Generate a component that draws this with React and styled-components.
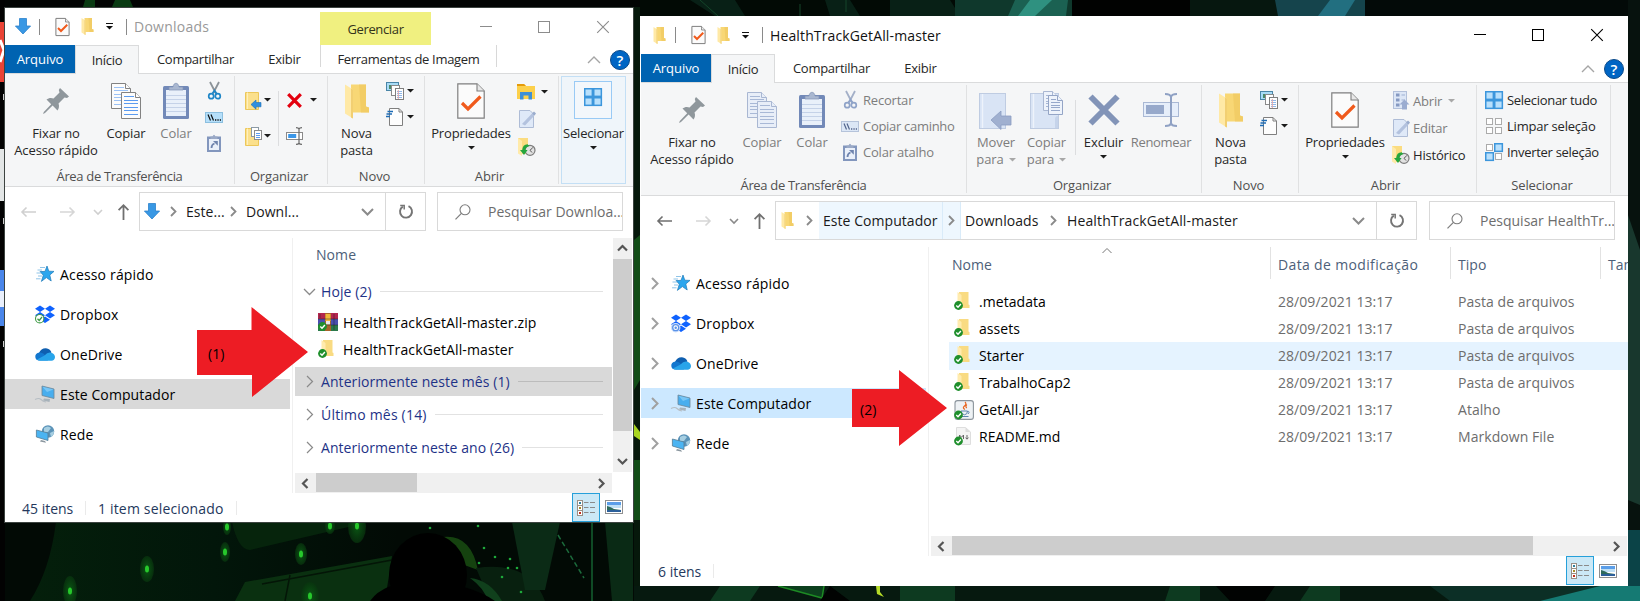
import React from "react";
import styled, { createGlobalStyle, css } from "styled-components";

const Global = createGlobalStyle`
  * { box-sizing: border-box; }
  html, body { margin: 0; padding: 0; background: #010502; overflow: hidden; }
  body { font-family: "Open Sans", "Noto Sans", sans-serif; font-size: 14px; color: #000; letter-spacing: 0.08px; }
  svg { display: block; flex: none; overflow: visible; }
`;

/* ---------- desktop and windows ---------- */
const Desktop = styled.div`
  position: relative;
  width: 1640px;
  height: 601px;
  overflow: hidden;
`;
const Wallpaper = styled.svg`
  position: absolute;
  inset: 0;
`;
const Window = styled.section`
  position: absolute;
  left: ${(p) => p.$x}px;
  top: ${(p) => p.$y}px;
  width: ${(p) => p.$w}px;
  height: ${(p) => p.$h}px;
  padding-left: ${(p) => p.$pad || 0}px;
  display: flex;
  flex-direction: column;
  background: #fff;
  overflow: hidden;
`;
const Frame = styled.div`
  position: absolute;
  left: 4px;
  top: 7px;
  width: 630px;
  height: 516px;
  background: #3c4340;
`;
const Pointer = styled.div`
  position: absolute;
  left: ${(p) => p.$x}px;
  top: ${(p) => p.$y}px;
  width: ${(p) => p.$w}px;
  height: ${(p) => p.$h}px;
  display: flex;
  align-items: center;
  padding-left: ${(p) => p.$pad}px;
  padding-top: 2px;
  font-size: 14px;
  background: #ed1c24;
  clip-path: polygon(${(p) => p.$shape});
`;

/* ---------- title bar ---------- */
const TitleBar = styled.header`
  display: flex;
  align-items: center;
  height: ${(p) => p.$h}px;
  flex: none;
`;
const TitleLeft = styled.div`
  display: flex;
  align-items: center;
  width: 315px;
  padding-left: 10px;
`;
const IconCell = styled.span`
  display: flex;
  align-items: center;
  justify-content: ${(p) => p.$justify || "center"};
  width: ${(p) => p.$w}px;
  flex: none;
`;
const Bar = styled.i`
  width: 1px;
  height: 16px;
  background: #8a8a8a;
`;
const Title = styled.span`
  padding-left: 7px;
  font-size: 14px;
  white-space: nowrap;
  color: ${(p) => (p.$dim ? "#999" : "#111")};
  letter-spacing: ${(p) => p.$ls || 0}px;
`;
const ContextLabel = styled.div`
  align-self: flex-end;
  width: 111px;
  height: 33px;
  display: flex;
  align-items: center;
  justify-content: center;
  font-size: 13px;
  letter-spacing: -0.35px;
  padding-top: 1px;
  color: #33331a;
  background: #f0f080;
`;
const Captions = styled.div`
  margin-left: auto;
  display: flex;
  padding-right: ${(p) => p.$pr}px;
`;

/* ---------- tabs ---------- */
const TabBar = styled.nav`
  display: flex;
  align-items: stretch;
  height: 29px;
  flex: none;
  font-size: 13px;
  color: #262626;
  box-shadow: inset 0 -1px #dadbdc;
`;
const Tab = styled.div`
  display: flex;
  align-items: center;
  justify-content: center;
  width: ${(p) => p.$w}px;
  height: 28px;
  white-space: nowrap;
  letter-spacing: ${(p) => p.$ls ?? -0.25}px;
  ${(p) => p.$file && css`background: #0063b1; color: #fff;`}
  ${(p) => p.$active && css`
    height: 29px;
    background: #f5f6f7;
    border: 1px solid #dadbdc;
    border-bottom: 0;
  `}
  ${(p) => p.$context && css`
    height: 22px;
    padding-top: 6px;
    margin-left: 3px;
    border-left: 1px solid #d8d8d8;
    border-right: 1px solid #d8d8d8;
  `}
`;
const TabTools = styled.div`
  margin-left: auto;
  display: flex;
  align-items: center;
  gap: 10px;
  padding-right: ${(p) => p.$pr}px;
`;
const Help = styled.span`
  width: 20px;
  height: 20px;
  border-radius: 50%;
  background: #0065c4;
  border: 1px solid #0b4a8a;
  color: #fff;
  font: 600 15px/18px "Open Sans", sans-serif;
  text-align: center;
`;

/* ---------- ribbon ---------- */
const Ribbon = styled.div`
  display: flex;
  height: 113px;
  flex: none;
  padding: 2px 0 2px;
  background: #f5f6f7;
  border-bottom: 1px solid #dadbdc;
  font-size: 13px;
  color: #262626;
`;
const Group = styled.div`
  display: flex;
  flex-direction: column;
  justify-content: space-between;
  width: ${(p) => p.$w}px;
  height: 108px;
  flex: none;
  border-right: 1px solid #e0e1e2;
`;
const GroupBody = styled.div`
  display: flex;
  height: 88px;
  padding-left: ${(p) => p.$pl || 0}px;
`;
const GroupLabel = styled.div`
  height: 16px;
  line-height: 16px;
  text-align: center;
  padding-right: ${(p) => p.$pr || 0}px;
  color: #505050;
  letter-spacing: ${(p) => p.$ls ?? -0.15}px;
`;
const BigButton = styled.div`
  display: flex;
  flex-direction: column;
  align-items: center;
  width: ${(p) => p.$w}px;
  padding-top: 7px;
  flex: none;
  color: ${(p) => (p.$off ? "#7d7d7d" : "#262626")};
`;
const BigIcon = styled.div`
  height: 36px;
  margin-bottom: 6px;
  display: flex;
  align-items: center;
`;
const Line = styled.div`
  height: 17px;
  line-height: 17px;
  white-space: nowrap;
  display: flex;
  align-items: center;
  gap: 5px;
  letter-spacing: ${(p) => p.$ls ?? -0.1}px;
`;
const CaretBelow = styled.div`
  margin-top: 4px;
`;
const Stack = styled.div`
  display: flex;
  flex-direction: column;
  padding-top: ${(p) => p.$pt}px;
  margin-left: ${(p) => p.$ml || 0}px;
`;
const SmallButton = styled.div`
  display: flex;
  align-items: center;
  height: ${(p) => p.$h}px;
  gap: ${(p) => p.$gap || 0}px;
  white-space: nowrap;
  letter-spacing: ${(p) => p.$ls ?? -0.2}px;
  color: ${(p) => (p.$off ? "#7d7d7d" : "#262626")};
`;
const Divider = styled.i`
  width: 1px;
  height: ${(p) => p.$h}px;
  margin: ${(p) => p.$m};
  background: #dcdddf;
`;
const SelectGroup = styled.div`
  width: 65px;
  height: 108px;
  margin-left: 2px;
  border: 1px solid #c3dff5;
  background: #eff5fa;
  display: flex;
  flex-direction: column;
  align-items: center;
  padding-top: 4px;
`;
const SelectFrame = styled.div`
  width: 38px;
  height: 38px;
  margin-bottom: 6px;
  margin-right: 2px;
  border: 1px solid #99caf5;
  background: #f3f7fb;
  display: flex;
  justify-content: center;
  padding-top: 6px;
`;

/* ---------- address row ---------- */
const AddressRow = styled.div`
  display: flex;
  height: 51px;
  flex: none;
  padding: 5px 0 6px;
`;
const History = styled.div`
  display: flex;
  align-items: center;
  width: 134px;
  padding-left: 16px;
`;
const Box = styled.div`
  display: flex;
  align-items: stretch;
  height: 39px;
  border: 1px solid #d9d9d9;
  width: ${(p) => p.$w}px;
  margin-right: ${(p) => p.$mr || 0}px;
  overflow: hidden;
`;
const Crumb = styled.span`
  display: flex;
  align-items: center;
  width: ${(p) => p.$w}px;
  flex: none;
  padding-left: ${(p) => p.$pl || 0}px;
  white-space: nowrap;
  letter-spacing: ${(p) => p.$ls || 0.05}px;
  color: #1a1a1a;
  ${(p) => p.$hot && css`background: #eef7fe; border-right: 1px solid #d9ebf9;`}
`;
const Grow = styled.span`
  flex: 1;
`;
const Refresh = styled.span`
  width: 40px;
  display: flex;
  align-items: center;
  justify-content: center;
  border-left: 1px solid #d9d9d9;
`;
const SearchText = styled.span`
  align-self: center;
  padding-left: 17px;
  white-space: nowrap;
  color: #6d6d6d;
  letter-spacing: ${(p) => p.$ls || 0}px;
`;

/* ---------- body ---------- */
const Body = styled.div`
  display: flex;
  flex: 1;
  min-height: 0;
`;
const Side = styled.aside`
  width: 288px;
  padding-top: 16px;
  border-right: 1px solid #f0f0f0;
  flex: none;
`;
const SideItem = styled.div`
  display: flex;
  align-items: center;
  width: 285px;
  height: 30px;
  margin: 5px 0 10px;
  background: ${(p) => p.$bg || "transparent"};
  & + & { margin-top: 10px; }
`;
const SideArrow = styled.span`
  width: 29px;
  padding-left: 11px;
`;
const SideIcon = styled.span`
  width: 22px;
  margin-right: 4px;
  display: flex;
  justify-content: center;
`;
const Label = styled.span`
  white-space: nowrap;
  letter-spacing: ${(p) => p.$ls ?? 0.08}px;
`;
const Main = styled.main`
  flex: 1;
  min-width: 0;
  display: flex;
  flex-direction: column;
  padding-left: 2px;
`;
const Split = styled.div`
  display: flex;
  flex: 1;
  min-height: 0;
`;
const List = styled.div`
  width: 317px;
  display: flex;
  flex-direction: column;
`;
const FileList = styled.div`
  flex: 1;
  padding-left: 18px;
`;
const ListHead = styled.div`
  height: 33px;
  line-height: 33px;
  padding-left: 21px;
  margin-bottom: 6px;
  color: #4d6079;
`;
const GroupHead = styled.div`
  display: flex;
  align-items: center;
  height: 29px;
  margin-top: ${(p) => p.$mt || 0}px;
  margin-bottom: ${(p) => p.$mb || 0}px;
  padding: 0 9px 0 9px;
  color: #1e3287;
  background: ${(p) => (p.$sel ? "#d9d9d9" : "transparent")};
`;
const Rule = styled.i`
  flex: 1;
  height: 1px;
  margin-left: 8px;
  background: ${(p) => (p.$dark ? "#bcbcbc" : "#e2e2e2")};
`;
const ChevronCell = styled.span`
  width: 17px;
  display: flex;
  padding-left: ${(p) => p.$pl || 0}px;
`;
const FileRow = styled.div`
  display: flex;
  align-items: center;
  height: 27px;
  padding-left: ${(p) => p.$pl}px;
  ${(p) => p.$hot && css`background: #e5f3ff; height: 28px; margin-bottom: -1px; padding-bottom: 1px;`}
`;
const FileIcon = styled.span`
  width: 25px;
  flex: none;
`;
const Cell = styled.span`
  width: ${(p) => p.$w}px;
  flex: none;
  white-space: nowrap;
  letter-spacing: ${(p) => p.$ls ?? 0.05}px;
  color: ${(p) => (p.$dim ? "#6d6d6d" : "#000")};
`;
const Columns = styled.div`
  display: flex;
  height: 32px;
  margin-bottom: 9px;
  overflow: hidden;
`;
const Column = styled.div`
  position: relative;
  width: ${(p) => p.$w}px;
  flex: none;
  padding: 2px 0 0 ${(p) => p.$pl}px;
  line-height: 31px;
  color: #4d6079;
  white-space: nowrap;
  letter-spacing: ${(p) => p.$ls || 0.05}px;
  border-right: 1px solid #e2e2e2;
`;
const SortMark = styled.span`
  position: absolute;
  left: 171px;
  top: 0;
`;
const VScroll = styled.div`
  width: 19px;
  height: 234px;
  margin-left: auto;
  margin-right: 1px;
  display: flex;
  flex-direction: column;
  align-items: center;
  background: #f0f0f0;
`;
const HScroll = styled.div`
  height: 20px;
  width: ${(p) => p.$w}px;
  flex: none;
  display: flex;
  align-items: center;
  background: #f0f0f0;
`;
const Arrow = styled.span`
  width: ${(p) => p.$w || 19}px;
  height: ${(p) => p.$h || 20}px;
  flex: none;
  display: flex;
  align-items: center;
  justify-content: center;
`;
const VThumb = styled.div`
  width: 100%;
  height: 172px;
  background: #cdcdcd;
`;
const HThumb = styled.div`
  height: 19px;
  align-self: flex-start;
  width: ${(p) => p.$w}px;
  background: #cdcdcd;
`;

/* ---------- status bar ---------- */
const Status = styled.footer`
  display: flex;
  align-items: center;
  height: ${(p) => p.$h}px;
  flex: none;
  color: #24385c;
  padding-left: 17px;
`;
const StatusCell = styled.span`
  width: ${(p) => p.$w}px;
  height: 14px;
  line-height: 15px;
  margin-right: 12px;
  border-right: 1px solid #eaeaea;
  white-space: nowrap;
  letter-spacing: ${(p) => p.$ls || 0}px;
`;
const ViewButton = styled.span`
  width: 28px;
  height: 29px;
  margin-left: auto;
  margin-right: 5px;
  align-self: flex-start;
  border: 1px solid #26a0da;
  background: #cbe8f6;
  display: flex;
  align-items: center;
  justify-content: center;
`;
const ThumbView = styled.span`
  margin-right: ${(p) => p.$mr}px;
  padding-bottom: 1px;
`;

/* ---------- icons ---------- */
const Svg = ({ w, h, children, ...r }) => (
  <svg width={w} height={h} viewBox={`0 0 ${w} ${h}`} fill="none" {...r}>{children}</svg>
);
const Caret = ({ c = "#1b1b1b" }) => (
  <Svg w={7} h={4}><path d="M0 0H7L3.5 3.6Z" fill={c} /></Svg>
);
const Chevron = ({ dir = "right", c = "#8a8a8a", size = 5, sw = 1.6 }) => {
  const s = size;
  const d = {
    right: [s, 2 * s, `M0 0L${s} ${s}L0 ${2 * s}`],
    left: [s, 2 * s, `M${s} 0L0 ${s}L${s} ${2 * s}`],
    down: [2 * s, s, `M0 0L${s} ${s}L${2 * s} 0`],
    up: [2 * s, s, `M0 ${s}L${s} 0L${2 * s} ${s}`],
  }[dir];
  return <Svg w={d[0]} h={d[1]}><path d={d[2]} stroke={c} strokeWidth={sw} /></Svg>;
};
const DownArrow = () => (
  <Svg w={16} h={17}><path d="M4.5 .5H11.5V8H15.6L8 16L.4 8H4.5Z" fill="#3998e4" stroke="#2b82cd" strokeWidth=".8" /></Svg>
);
const Folder = ({ w = 13, h = 17 }) => (
  <svg width={w} height={h} viewBox="0 0 24 34">
    <path d="M6 0H21V22L24 23V28H6Z" fill="#f8d775" />
    <path d="M14 0H21V22L24 23V28H16Z" fill="#efc75c" opacity=".6" />
    <path d="M0 0L8 5V34L0 29Z" fill="#ffe9a6" />
    <path d="M6 4L8 5V34L6 33Z" fill="#f2cf72" />
  </svg>
);
const CheckDoc = ({ w = 14, h = 18 }) => (
  <svg width={w} height={h} viewBox="0 0 28 36">
    <path d="M.8 .8H20L27.2 8V35.2H.8Z" fill="#fbfbfb" stroke="#7f7f7f" strokeWidth={w < 20 ? 2 : 1.2} />
    <path d="M20 .8V8H27.2" fill="#e8e8e8" stroke="#7f7f7f" strokeWidth={w < 20 ? 1.6 : 1.1} />
    <path d="M5 20L11 26L23.5 13.5" fill="none" stroke="#f05a1c" strokeWidth={w < 20 ? 4 : 3.2} />
  </svg>
);
const QuickCaret = () => (
  <Svg w={7} h={7}><path d="M0 .5H7" stroke="#111" /><path d="M0 3H7L3.5 6.6Z" fill="#111" /></Svg>
);
const Pin = () => (
  <Svg w={26} h={26}>
    <path d="M17 0L26 8.5L24 10L21.5 9.5L15.5 15.5C16.5 18 16 20.5 14.5 22.5L9.6 17.6L2 25L0 26L.8 24L8.2 16.2L3.5 11.5C5.5 10 8 9.5 10.5 10.5L16.5 4.5L15.8 2Z" fill="#8f979c" />
  </Svg>
);
const Page = ({ x, y, w = 20, h = 26, fill, edge, line, n = 6 }) => (
  <g transform={`translate(${x} ${y})`}>
    <path d={`M.5 .5H${w - 5.5}L${w - 0.5} 5.5V${h - 0.5}H.5Z`} fill={fill} stroke={edge} />
    <path d={`M${w - 5.5} .5V5.5H${w - 0.5}`} stroke={edge} fill={fill} />
    {Array.from({ length: n }, (_, i) => {
      const yy = Math.round(4 + i * ((h - 6) / n)) + 0.5;
      return <path key={i} d={`M3 ${yy}H${yy < 7 ? w - 7 : w - 3}`} stroke={line} />;
    })}
  </g>
);
const CopyIcon = ({ off }) => {
  const c = off ? { fill: "#e8eef8", edge: "#a9b7d2", line: "#a8b8d6" } : { fill: "#fcfcfc", edge: "#828282", line: "#5b9bf0" };
  return (
    <Svg w={30} h={36}>
      <Page x={0} y={0} {...c} line={off ? c.line : "#9cc2f5"} />
      <Page x={10} y={9} w={20} h={27} {...c} />
    </Svg>
  );
};
const Clipboard = () => (
  <Svg w={26} h={36}>
    <rect y="3" width="26" height="33" rx="1.5" fill="#7289b8" />
    <rect x="3" y="7" width="20" height="26" fill="#e9f0fa" />
    <path d="M3 12.5H23M3 16.5H23M3 20.5H23M3 24.5H23M3 28.5H23" stroke="#c5d2e8" />
    <path d="M6 7V4H10C10.5 -1 15.5 -1 16 4H20V7Z" fill="#a9b7d0" stroke="#8293b5" strokeWidth=".7" />
  </Svg>
);
const Scissors = ({ off }) => {
  const b = off ? "#8fa3c8" : "#1f86c7";
  return (
    <Svg w={13} h={18}>
      <path d="M2 0L8 11.5M11 0L5 11.5" stroke={off ? "#a4b0c8" : "#8b9298"} strokeWidth="1.8" />
      <circle cx="3.2" cy="14.2" r="2.5" stroke={b} strokeWidth="1.7" />
      <circle cx="9.8" cy="14.2" r="2.5" stroke={b} strokeWidth="1.7" />
      <path d="M4.5 11.5L6.5 8.5L8.5 11.5" stroke={b} strokeWidth="1.8" />
    </Svg>
  );
};
const PathIcon = ({ off }) => (
  <Svg w={18} h={11}>
    <rect x=".5" y=".5" width="17" height="10" fill={off ? "#dce7f6" : "#b5dffa"} stroke={off ? "#b5c3da" : "#8cbfdf"} />
    <path d="M3 2.5L5.5 8.5M6 2.5L8.5 8.5" stroke={off ? "#53658c" : "#111"} strokeWidth="1.2" />
    <path d="M10 8H11.3M12.4 8H13.7M14.8 8H16" stroke={off ? "#53658c" : "#111"} strokeWidth="1.3" />
  </Svg>
);
const PasteLink = () => (
  <Svg w={14} h={18}>
    <rect y="2.5" width="14" height="15.5" fill="#8296bd" />
    <rect x="2" y="5" width="10" height="11" fill="#eaf0fa" />
    <path d="M3.5 5V2.5H5.5Q7 -1 8.5 2.5H10.5V5Z" fill="#9aa9c6" />
    <path d="M4.5 14Q4.5 10.5 7.5 9.5" stroke="#6f84ae" strokeWidth="1.8" />
    <path d="M6 7H10.8V11.8Z" fill="#6f84ae" />
  </Svg>
);
const BookSmall = ({ copy }) => (
  <Svg w={18} h={19}>
    <path d="M.5 1.5H13.5V18.5H.5Z" fill="#fbe08c" stroke="#ecc75a" />
    <path d="M2.5 1.5V18" stroke="#fff0bd" />
    {copy ? (
      <>
        <rect x="6.5" y=".5" width="7" height="9" fill="#fff" stroke="#8c9aa5" />
        <rect x="9.5" y="3.5" width="7" height="9" fill="#fff" stroke="#8c8c8c" />
        <path d="M11 6.5H15M11 8.5H15M11 10.5H15" stroke="#5b9bf0" />
      </>
    ) : (
      <path d="M6 13.5L11 9V11.5H16V15.8H11V18.2Z" fill="#2e8fdf" stroke="#1f6fb5" strokeWidth=".6" />
    )}
  </Svg>
);
const RedX = () => (
  <Svg w={15} h={15}><path d="M1.2 1.2L13.8 13.8M13.8 1.2L1.2 13.8" stroke="#e3000f" strokeWidth="3.2" /></Svg>
);
const RenameSmall = () => (
  <Svg w={17} h={18}>
    <rect x=".5" y="5.5" width="16" height="7" fill="#fff" stroke="#8a8a8a" />
    <rect x="2.2" y="7" width="8" height="4" fill="#3a96e8" />
    <path d="M13 1V17M10 .6Q12.6 .6 13 2Q13.4 .6 16 .6M10 17.4Q12.6 17.4 13 16Q13.4 17.4 16 17.4" stroke="#6a6a6a" strokeWidth="1.2" />
  </Svg>
);
const NewItem = () => (
  <Svg w={18} h={18}>
    <rect x=".5" y=".5" width="12" height="8" fill="#a9dcf7" stroke="#4a86a8" />
    <rect x="3" y="3" width="3" height="4" fill="#4a8a6a" />
    <rect x="5.5" y="3.5" width="8" height="10" fill="#fff" stroke="#8a8a8a" />
    <rect x="9.5" y="6.5" width="8" height="11" fill="#fff" stroke="#7f7f7f" />
    <path d="M11 9.5H16M11 11.5H16M11 13.5H16M11 15.5H16" stroke="#8fb8ea" />
    <path d="M12.3 8V17" stroke="#e7a7a7" />
  </Svg>
);
const EasyAccess = () => (
  <Svg w={18} h={18}>
    <path d="M3.5 .5H13L16.5 4V17.5H3.5Z" fill="#fdfdfd" stroke="#7f7f7f" />
    <path d="M13 .5V4H16.5" stroke="#7f7f7f" />
    <path d="M1.5 3.5H7M.5 6H6M0 8.5H4" stroke="#1f6cb5" strokeWidth="1.3" />
  </Svg>
);
const OpenFolder = () => (
  <Svg w={18} h={17}>
    <path d="M0 1H7L9 3H18V16H0Z" fill="#fcd04b" />
    <path d="M0 1H7L9 3H0Z" fill="#e59b0a" />
    <path d="M3 16.5V9H15V16.5H11.5V12.5H6.5V16.5Z" fill="#3d8fd8" />
  </Svg>
);
const EditDoc = () => (
  <Svg w={17} h={18}>
    <path d="M.5 .5H11L14.5 4V17.5H.5Z" fill="#dfe9f8" stroke="#aebcd6" />
    <path d="M3 14L13 3.5L15.5 5.5L6 15.5Z" fill="#b3c2de" />
    <path d="M13 3.5L15 1.5L17 3.5L15.5 5.5Z" fill="#9aaccd" />
  </Svg>
);
const OpenListOff = () => (
  <Svg w={17} h={19}>
    <rect x=".5" y=".5" width="13" height="17" fill="#dce6f6" stroke="#b2c0da" />
    <path d="M3 2.5H6.5V5.5H3ZM3 7.5H6.5V10.5H3ZM3 12.5H6.5V15.5H3Z" fill="#8599c2" />
    <path d="M8.5 4H12M8.5 9H12" stroke="#9db0d2" />
    <path d="M11.5 8.5L16.5 13.5H14V18.5H9V13.5H6.5Z" fill="#9aacd0" />
  </Svg>
);
const HistoryIcon = () => (
  <Svg w={18} h={18}>
    <path d="M0 0H10V16H4L0 15Z" fill="#fbdc80" />
    <path d="M0 0L4 3V18L0 15.5Z" fill="#ffeaa9" />
    <circle cx="12" cy="12.3" r="5" fill="#e2e2e2" stroke="#7c7c7c" strokeWidth="1.2" />
    <path d="M12 12.3L14.8 9.6M12 12.3L14 14.5" stroke="#555" />
    <path d="M9.6 6.2Q4.5 6.5 4.2 12H2L6 17L9.6 12H7.4Q7.5 9 11.5 8Z" fill="#25a63d" />
  </Svg>
);
const Grid4 = ({ fills = [1, 1, 1, 1] }) => (
  <Svg w={18} h={18}>
    {fills.map((f, i) => {
      const x = (i % 2) * 9, y = i > 1 ? 9 : 0;
      return f
        ? <rect key={i} x={x + 0.75} y={y + 0.75} width="7.6" height="7.6" fill="#b9e0fc" stroke="#3c96dc" strokeWidth="1.5" />
        : <rect key={i} x={x + 1.5} y={y + 1.5} width="6" height="6" fill="#fff" stroke="#ababab" />;
    })}
  </Svg>
);
const BigBook = ({ copy }) => (
  <Svg w={34} h={38}>
    <rect x=".5" y="2.5" width={copy ? 28 : 26} height="35" fill="#d9e4f5" stroke="#bfcce2" />
    <path d="M3.5 3V37" stroke="#eef3fb" strokeWidth="1.4" />
    {copy ? (
      <>
        <Page x={13} y={0} w={15} h={20} fill="#eef3fb" edge="#a9b7d2" line="#a8b8d6" n={5} />
        <Page x={18} y={4} w={15} h={20} fill="#eef3fb" edge="#94a5c6" line="#97a9cb" n={5} />
        <path d="M25 37V28Q25 25 28 25V37Z" fill="#c5d3ea" />
      </>
    ) : (
      <path d="M12 29L22 20V25H32V34H22V38.5Z" fill="#a0b0d0" stroke="#8c9dc2" strokeWidth=".8" />
    )}
  </Svg>
);
const BigX = () => (
  <Svg w={32} h={32}><path d="M2.5 2.5L29.5 29.5M29.5 2.5L2.5 29.5" stroke="#8294b8" strokeWidth="6" /></Svg>
);
const BigRename = () => (
  <Svg w={36} h={34}>
    <rect x=".5" y="9.5" width="35" height="14" fill="#e6eefa" stroke="#a9b8d4" />
    <rect x="3" y="12" width="18" height="9" fill="#97a9cb" />
    <path d="M28 2V32M22 1Q27.5 1 28 4Q28.5 1 34 1M22 33Q27.5 33 28 30Q28.5 33 34 33" stroke="#8fa1c4" strokeWidth="2" />
  </Svg>
);
const NavArrow = ({ dir, c }) => (
  <Svg w={15} h={10}>
    {dir === "left"
      ? <path d="M15 5H1.2M5.5 .5L1 5L5.5 9.5" stroke={c} strokeWidth="1.6" />
      : <path d="M0 5H13.8M9.5 .5L14 5L9.5 9.5" stroke={c} strokeWidth="1.6" />}
  </Svg>
);
const UpArrow = () => (
  <Svg w={11} h={16}><path d="M5.5 16V1.2M.6 6.2L5.5 1.2L10.4 6.2" stroke="#707070" strokeWidth="1.8" /></Svg>
);
const RefreshIcon = () => (
  <Svg w={14} h={15}>
    <path d="M9.5 2.2A6 6 0 1 1 3.8 2.6" stroke="#757575" strokeWidth="1.9" />
    <path d="M1.2 1.5H5.2V5.6" stroke="#757575" strokeWidth="1.5" />
  </Svg>
);
const Magnifier = () => (
  <Svg w={16} h={16}>
    <circle cx="10" cy="5.8" r="5" stroke="#7c7c7c" strokeWidth="1.1" />
    <path d="M6.4 9.4L.5 15.3" stroke="#7c7c7c" strokeWidth="1.2" />
  </Svg>
);
const Star = () => (
  <Svg w={18} h={16}>
    <path d="M11 0L12.8 5.2L18 5.4L13.8 9L15.2 15L10.4 11.6L5.4 15.4L7.3 9.2L4 5.6L9 5.4Z" fill="#2ba6ee" stroke="#1b79b8" strokeWidth=".7" />
    <path d="M4 1.5H9M1.5 4H6M.5 7H5M2 10H6M0 12.8H4.5" stroke="#8fc4e8" />
  </Svg>
);
const Dropbox = ({ sync }) => (
  <Svg w={20} h={19}>
    <path d="M5 .5L10 3.7L5 7L0 3.7ZM15 .5L20 3.7L15 7L10 3.7ZM5 7L10 10.3L5 13.5L0 10.3ZM15 7L20 10.3L15 13.5L10 10.3ZM10 11.6L15 14.8L10 18L5 14.8Z" fill="#0f62fe" />
    <circle cx="4.7" cy="13.7" r="4.2" fill={sync ? "#5a93e8" : "#fff"} stroke={sync ? "#cfe0fb" : "#3e9a45"} strokeWidth="1.1" />
    {sync
      ? <circle cx="4.7" cy="13.7" r="1.8" stroke="#fff" strokeWidth="1.1" />
      : <path d="M2.5 13.8L4.2 15.5L7 12" stroke="#3e9a45" strokeWidth="1.3" />}
  </Svg>
);
const OneDrive = () => (
  <Svg w={20} h={13}>
    <path d="M4 5Q6 0 11 .2Q15 .5 16.5 4.5L9 8Z" fill="#0f5fb0" />
    <path d="M.3 9Q0 5 4.5 4.5Q7 4.2 9 6L13 12.5H3.5Q.6 12 .3 9Z" fill="#1277cf" />
    <path d="M9.5 7.5Q13 3.4 17 5Q20 6.3 20 9.3Q19.6 12.6 16.5 12.8H5Q3 12.5 2 11.5Z" fill="#28a4ea" />
  </Svg>
);
const Computer = () => (
  <Svg w={20} h={17}>
    <path d="M7 0L19 3V12.5L7 9.5Z" fill="#49aeee" stroke="#6d8698" strokeWidth=".8" />
    <path d="M7.5 .8L18.5 3.6L12 6Z" fill="#8fd0f8" opacity=".7" />
    <path d="M9 12.5L15 13L14.5 16L8 14.5Z" fill="#a7b2ba" />
    <path d="M0 13.5Q4 11.5 6 13.5T11 16" stroke="#b7bec4" strokeWidth="1.1" />
  </Svg>
);
const Network = () => (
  <Svg w={19} h={18}>
    <circle cx="12" cy="6.5" r="6.2" fill="#5b93b8" />
    <path d="M8 3Q12 0 15 3L12 7L8 8ZM14 8L18 6Q18 10 15 12Z" fill="#a7cfe2" />
    <path d="M.4 5L12 8V15.5L.4 12Z" fill="#4bb4f2" stroke="#557c94" strokeWidth=".8" />
    <path d="M5 15L9 16L10 17.8L4 16.6Z" fill="#8b979f" />
  </Svg>
);
const Badge = ({ y = 9 }) => (
  <g transform={`translate(0 ${y})`}>
    <circle cx="4.5" cy="4.5" r="4.4" fill="#1f8f2c" />
    <path d="M2.3 4.6L4 6.3L6.9 3" stroke="#fff" strokeWidth="1.4" />
  </g>
);
const FolderFile = () => (
  <Svg w={20} h={19}>
    <path d="M5 0H14.5V12.5L15.5 13V16H5Z" fill="#f9db82" />
    <path d="M3.5 0L7.5 3V17L3.5 15Z" fill="#ffebae" />
    <Badge />
  </Svg>
);
const ZipFile = () => (
  <Svg w={20} h={19}>
    <rect width="20" height="6" fill="#b3264e" />
    <rect y="6" width="20" height="6" fill="#4a4fae" />
    <rect y="12" width="20" height="6" fill="#2c7a4b" />
    <rect x="7" width="6" height="18" fill="#a8642a" />
    <path d="M7.5 1H12.5V8H7.5Z" fill="#f0b83c" />
    <rect x="8" y="8" width="4" height="3.5" fill="#e9e9e9" />
    <path d="M2 1V5M16 1V17M0 6H20M0 12H20" stroke="#222" opacity=".45" />
    <Badge />
  </Svg>
);
const JarFile = () => (
  <Svg w={20} h={20}>
    <rect x="1" y=".6" width="18.4" height="18.8" rx="2.5" fill="#eef2f5" stroke="#8b949c" strokeWidth="1.1" />
    <path d="M11 2Q13 4 10.5 6T11 9.5M12.8 4.5Q11 6.5 12.8 8" stroke="#e8641e" strokeWidth="1.2" />
    <path d="M7 11H13.5Q13.5 14.5 10.5 14.8Q7.6 14.5 7 11ZM13.5 11.5Q16.5 11 14 14M6.5 16.5H14.5" stroke="#5c84ad" strokeWidth="1" />
    <Badge y={10.5} />
  </Svg>
);
const MdFile = () => (
  <Svg w={20} h={19}>
    <path d="M2.5 .5H11.5L16.5 5V17.5H2.5Z" fill="#f4f4f4" stroke="#dedede" />
    <path d="M11.5 .5V5H16.5Z" fill="#dcdcdc" />
    <path d="M5.5 12V8L7.5 10.3L9.5 8V12M13 8V12M11.5 10.6L13 12.2L14.5 10.6" stroke="#666" />
    <Badge y={9.5} />
  </Svg>
);
const DetailsIcon = () => (
  <Svg w={18} h={16}>
    {[0, 5, 10].map((y, i) => (
      <g key={y}>
        <rect x=".5" y={y + 0.5} width="5" height="5" fill="#fff" stroke="#9a8f86" />
        <rect x="2" y={y + 2} width="2" height="2" fill={["#2f7f9c", "#a58b2a", "#c2301c"][i]} />
        <path d={`M7 ${y + 2.5}H11.5M13 ${y + 2.5}H18`} stroke="#8a8a8a" />
      </g>
    ))}
  </Svg>
);
const PictureIcon = () => (
  <Svg w={18} h={14}>
    <rect x=".5" y=".5" width="17" height="13" fill="#fff" stroke="#8f8f8f" />
    <rect x="2" y="2" width="14" height="5" fill="#5b9ee8" />
    <rect x="2" y="5" width="14" height="3" fill="#bfe0f5" />
    <path d="M2 6Q6 7 9 9L16 10V12H2Z" fill="#2f6b5c" />
    <path d="M2 10H16V12H2Z" fill="#2c5f9a" />
  </Svg>
);
const Minimize = ({ c }) => <Svg w={12} h={12}><path d="M0 5.5H12" stroke={c} /></Svg>;
const Maximize = ({ c }) => <Svg w={12} h={12}><rect x=".5" y=".5" width="11" height="11" stroke={c} /></Svg>;
const Close = ({ c }) => <Svg w={12} h={12}><path d="M.2 .2L11.8 11.8M11.8 .2L.2 11.8" stroke={c} strokeWidth="1.1" /></Svg>;

/* ---------- shared pieces ---------- */
const QuickAccess = ({ icon, title, dim, ls }) => (
  <TitleLeft>
    <IconCell $w={16}>{icon}</IconCell>
    <IconCell $w={16}><Bar /></IconCell>
    <IconCell $w={30}><CheckDoc w={15} h={18} /></IconCell>
    <IconCell $w={20}><Folder /></IconCell>
    <IconCell $w={16} $justify="flex-end"><QuickCaret /></IconCell>
    <IconCell $w={14} $justify="flex-end"><Bar /></IconCell>
    <Title $dim={dim} $ls={ls}>{title}</Title>
  </TitleLeft>
);
const CaptionButtons = ({ c, pr }) => (
  <Captions $pr={pr}>
    <IconCell $w={58}><Minimize c={c} /></IconCell>
    <IconCell $w={58}><Maximize c={c} /></IconCell>
    <IconCell $w={60}><Close c={c} /></IconCell>
  </Captions>
);
const BaseTabs = () => (
  <>
    <Tab $file $w={70} $ls={-0.05}>Arquivo</Tab>
    <Tab $active $w={64}>Início</Tab>
    <Tab $w={113}>Compartilhar</Tab>
    <Tab $w={65}>Exibir</Tab>
  </>
);
const ClipboardButtons = ({ off }) => (
  <>
    <BigButton $w={90}>
      <BigIcon><Pin /></BigIcon>
      <Line>Fixar no</Line>
      <Line>Acesso rápido</Line>
    </BigButton>
    <BigButton $w={50} $off={off}><BigIcon><CopyIcon off={off} /></BigIcon><Line>Copiar</Line></BigButton>
    <BigButton $w={50} $off><BigIcon><Clipboard /></BigIcon><Line>Colar</Line></BigButton>
  </>
);
const NewGroup = () => (
  <Group $w={97}>
    <GroupBody>
      <BigButton $w={57}>
        <BigIcon><Folder w={24} h={35} /></BigIcon>
        <Line>Nova</Line>
        <Line>pasta</Line>
      </BigButton>
      <Stack $pt={2} $ml={1}>
        <SmallButton $h={26} $gap={3}><NewItem /><Caret /></SmallButton>
        <SmallButton $h={26} $gap={3}><EasyAccess /><Caret /></SmallButton>
      </Stack>
    </GroupBody>
    <GroupLabel $pr={3}>Novo</GroupLabel>
  </Group>
);
const PropertiesButton = () => (
  <BigButton $w={92}>
    <BigIcon><CheckDoc w={28} h={36} /></BigIcon>
    <Line $ls={-0.15}>Propriedades</Line>
    <CaretBelow><Caret /></CaretBelow>
  </BigButton>
);
const HistoryNav = ({ back }) => (
  <History>
    <IconCell $w={15}><NavArrow dir="left" c={back ? "#6f6f6f" : "#d0d0d0"} /></IconCell>
    <IconCell $w={39} $justify="flex-end"><NavArrow dir="right" c="#d6d6d6" /></IconCell>
    <IconCell $w={27} $justify="flex-end"><Chevron dir="down" size={4} c={back ? "#8a8a8a" : "#cfcfcf"} /></IconCell>
    <IconCell $w={27} $justify="flex-end"><UpArrow /></IconCell>
  </History>
);
const places = [
  ["Acesso rápido", () => <Star />, 0.17],
  ["Dropbox", (s) => <Dropbox sync={s} />, 0.2],
  ["OneDrive", () => <OneDrive />, 0.1],
  ["Este Computador", () => <Computer />, 0.1],
  ["Rede", () => <Network />, 0.15],
];
const Places = ({ arrows, selected }) => (
  <Side>
    {places.map(([name, icon, ls]) => (
      <SideItem key={name} $bg={name === "Este Computador" ? selected : undefined}>
        <SideArrow>{arrows && <Chevron size={5.5} c="#a0a0a0" sw={2} />}</SideArrow>
        <SideIcon>{icon(arrows)}</SideIcon>
        <Label $ls={ls}>{name}</Label>
      </SideItem>
    ))}
  </Side>
);

/* ---------- left window ---------- */
const DownloadsWindow = () => (
  <Window $x={5} $y={8} $w={628} $h={514}>
    <TitleBar $h={37}>
      <QuickAccess icon={<DownArrow />} title="Downloads" dim ls={0.25} />
      <ContextLabel>Gerenciar</ContextLabel>
      <CaptionButtons c="#8c8c8c" pr={0} />
    </TitleBar>
    <TabBar>
      <BaseTabs />
      <Tab $context $w={177} $ls={-0.3}>Ferramentas de Imagem</Tab>
      <TabTools $pr={3}><Chevron dir="up" size={6} c="#a5a5a5" sw={1.4} /><Help>?</Help></TabTools>
    </TabBar>
    <Ribbon>
      <Group $w={230}>
        <GroupBody $pl={6}>
          <ClipboardButtons />
          <Stack $pt={2} $ml={3}>
            <SmallButton $h={26}><IconCell $w={20}><Scissors /></IconCell></SmallButton>
            <SmallButton $h={26}><IconCell $w={20}><PathIcon /></IconCell></SmallButton>
            <SmallButton $h={26}><IconCell $w={20}><PasteLink /></IconCell></SmallButton>
          </Stack>
        </GroupBody>
        <GroupLabel $ls={-0.33}>Área de Transferência</GroupLabel>
      </Group>
      <Group $w={93}>
        <GroupBody $pl={10}>
          <Stack $pt={6}>
            <SmallButton $h={36} $gap={1}><BookSmall /><Caret /></SmallButton>
            <SmallButton $h={36} $gap={1}><BookSmall copy /><Caret /></SmallButton>
          </Stack>
          <Divider $h={55} $m="15px 6px 0 7px" />
          <Stack $pt={6}>
            <SmallButton $h={36} $gap={7}><IconCell $w={18}><RedX /></IconCell><Caret /></SmallButton>
            <SmallButton $h={36}><IconCell $w={18}><RenameSmall /></IconCell></SmallButton>
          </Stack>
        </GroupBody>
        <GroupLabel $pr={4}>Organizar</GroupLabel>
      </Group>
      <NewGroup />
      <Group $w={134}>
        <GroupBody>
          <PropertiesButton />
          <Stack $pt={2}>
            <SmallButton $h={27} $gap={6}><OpenFolder /><Caret /></SmallButton>
            <SmallButton $h={28}><IconCell $w={20}><EditDoc /></IconCell></SmallButton>
            <SmallButton $h={28}><IconCell $w={20}><HistoryIcon /></IconCell></SmallButton>
          </Stack>
        </GroupBody>
        <GroupLabel $pr={4}>Abrir</GroupLabel>
      </Group>
      <SelectGroup>
        <SelectFrame><Grid4 /></SelectFrame>
        <Line $ls={-0.2}>Selecionar</Line>
        <CaretBelow><Caret /></CaretBelow>
      </SelectGroup>
    </Ribbon>
    <AddressRow>
      <HistoryNav />
      <Box $w={287} $mr={11}>
        <Crumb $pl={4} $w={46}><DownArrow /><Crumb $pl={11} $w={20}><Chevron size={4.5} sw={1.8} /></Crumb></Crumb>
        <Crumb $w={45}>Este...</Crumb>
        <Crumb $w={15}><Chevron size={4.5} sw={1.8} /></Crumb>
        <Crumb $w={60}>Downl...</Crumb>
        <Grow />
        <IconCell $w={23} $justify="flex-start"><Chevron dir="down" size={5.5} sw={2} /></IconCell>
        <Refresh><RefreshIcon /></Refresh>
      </Box>
      <Box $w={186}>
        <IconCell $w={33} $justify="flex-end"><Magnifier /></IconCell>
        <SearchText>Pesquisar Downloa...</SearchText>
      </Box>
    </AddressRow>
    <Body>
      <Places selected="#d9d9d9" />
      <Main>
        <Split>
          <List>
            <ListHead>Nome</ListHead>
            <GroupHead $mb={3}><ChevronCell><Chevron dir="down" size={5.5} sw={1.3} /></ChevronCell><Label>Hoje (2)</Label><Rule /></GroupHead>
            <FileRow $pl={23}><FileIcon><ZipFile /></FileIcon><Label $ls={0.12}>HealthTrackGetAll-master.zip</Label></FileRow>
            <FileRow $pl={23}><FileIcon><FolderFile /></FileIcon><Label $ls={0.12}>HealthTrackGetAll-master</Label></FileRow>
            <GroupHead $sel $mt={4}><ChevronCell $pl={3}><Chevron size={5.5} sw={1.2} /></ChevronCell><Label>Anteriormente neste mês (1)</Label><Rule $dark /></GroupHead>
            <GroupHead $mt={4}><ChevronCell $pl={3}><Chevron size={5.5} sw={1.2} /></ChevronCell><Label $ls={0.2}>Último mês (14)</Label><Rule /></GroupHead>
            <GroupHead $mt={4}><ChevronCell $pl={3}><Chevron size={5.5} sw={1.2} /></ChevronCell><Label $ls={0.05}>Anteriormente neste ano (26)</Label><Rule /></GroupHead>
          </List>
          <VScroll>
            <Arrow $h={21}><Chevron dir="up" size={4.5} c="#555" sw={2.2} /></Arrow>
            <VThumb />
            <Grow />
            <Arrow $h={21}><Chevron dir="down" size={4.5} c="#555" sw={2.2} /></Arrow>
          </VScroll>
        </Split>
        <HScroll $w={317}>
          <Arrow $w={21}><Chevron dir="left" size={4.5} c="#555" sw={2.2} /></Arrow>
          <HThumb $w={101} />
          <Grow />
          <Arrow $w={21}><Chevron size={4.5} c="#555" sw={2.2} /></Arrow>
        </HScroll>
      </Main>
    </Body>
    <Status $h={29}>
      <StatusCell $w={64}>45 itens</StatusCell>
      <StatusCell $w={139} $ls={0.17}>1 item selecionado</StatusCell>
      <ViewButton><DetailsIcon /></ViewButton>
      <ThumbView $mr={10}><PictureIcon /></ThumbView>
    </Status>
  </Window>
);

/* ---------- right window ---------- */
const files = [
  [".metadata", "Pasta de arquivos", <FolderFile />],
  ["assets", "Pasta de arquivos", <FolderFile />],
  ["Starter", "Pasta de arquivos", <FolderFile />],
  ["TrabalhoCap2", "Pasta de arquivos", <FolderFile />],
  ["GetAll.jar", "Atalho", <JarFile />],
  ["README.md", "Markdown File", <MdFile />],
];
const ProjectWindow = () => (
  <Window $x={640} $y={16} $w={988} $h={570} $pad={1}>
    <TitleBar $h={38}>
      <QuickAccess icon={<Folder />} title="HealthTrackGetAll-master" ls={0.13} />
      <CaptionButtons c="#000" pr={1} />
    </TitleBar>
    <TabBar>
      <BaseTabs />
      <TabTools $pr={4}><Chevron dir="up" size={6} c="#a5a5a5" sw={1.4} /><Help>?</Help></TabTools>
    </TabBar>
    <Ribbon>
      <Group $w={326}>
        <GroupBody $pl={6}>
          <ClipboardButtons off />
          <Stack $pt={2} $ml={3}>
            <SmallButton $off $h={26} $gap={3}><IconCell $w={20}><Scissors off /></IconCell>Recortar</SmallButton>
            <SmallButton $off $h={26} $gap={3} $ls={-0.3}><IconCell $w={20}><PathIcon off /></IconCell>Copiar caminho</SmallButton>
            <SmallButton $off $h={26} $gap={3} $ls={-0.2}><IconCell $w={20}><PasteLink /></IconCell>Colar atalho</SmallButton>
          </Stack>
        </GroupBody>
        <GroupLabel $ls={-0.33}>Área de Transferência</GroupLabel>
      </Group>
      <Group $w={235}>
        <GroupBody $pl={3}>
          <BigButton $off $w={52}>
            <BigIcon><BigBook /></BigIcon>
            <Line>Mover</Line>
            <Line>para <Caret c="#a8a8a8" /></Line>
          </BigButton>
          <BigButton $off $w={49}>
            <BigIcon><BigBook copy /></BigIcon>
            <Line>Copiar</Line>
            <Line>para <Caret c="#a8a8a8" /></Line>
          </BigButton>
          <Divider $h={55} $m="15px 0 0 4px" />
          <BigButton $w={55}><BigIcon><BigX /></BigIcon><Line>Excluir</Line><CaretBelow><Caret /></CaretBelow></BigButton>
          <BigButton $off $w={60}><BigIcon><BigRename /></BigIcon><Line $ls={-0.3}>Renomear</Line></BigButton>
        </GroupBody>
        <GroupLabel $pr={4}>Organizar</GroupLabel>
      </Group>
      <NewGroup />
      <Group $w={178}>
        <GroupBody>
          <PropertiesButton />
          <Stack $pt={2} $ml={1}>
            <SmallButton $off $h={27} $gap={3}><IconCell $w={18}><OpenListOff /></IconCell>Abrir <IconCell $w={10} $justify="flex-end"><Caret c="#a8a8a8" /></IconCell></SmallButton>
            <SmallButton $off $h={27} $gap={3}><IconCell $w={18}><EditDoc /></IconCell>Editar</SmallButton>
            <SmallButton $h={27} $gap={3}><IconCell $w={18}><HistoryIcon /></IconCell>Histórico</SmallButton>
          </Stack>
        </GroupBody>
        <GroupLabel $pr={4}>Abrir</GroupLabel>
      </Group>
      <Group $w={134}>
        <GroupBody $pl={8}>
          <Stack $pt={2}>
            <SmallButton $h={26} $gap={4} $ls={-0.3}><Grid4 />Selecionar tudo</SmallButton>
            <SmallButton $h={26} $gap={4}><Grid4 fills={[0, 0, 0, 0]} />Limpar seleção</SmallButton>
            <SmallButton $h={26} $gap={4} $ls={-0.3}><Grid4 fills={[0, 1, 1, 0]} />Inverter seleção</SmallButton>
          </Stack>
        </GroupBody>
        <GroupLabel $pr={3}>Selecionar</GroupLabel>
      </Group>
    </Ribbon>
    <AddressRow>
      <HistoryNav back />
      <Box $w={642} $mr={12}>
        <Crumb $pl={5} $w={43}><Folder /><Crumb $pl={13} $w={20}><Chevron size={4.5} sw={1.8} /></Crumb></Crumb>
        <Crumb $hot $pl={4} $w={124}>Este Computador</Crumb>
        <Crumb $hot $pl={6} $w={18}><Chevron size={4.5} sw={1.8} /></Crumb>
        <Crumb $pl={4} $w={90}>Downloads</Crumb>
        <Crumb $w={16}><Chevron size={4.5} sw={1.8} /></Crumb>
        <Crumb $w={180} $ls={0.13}>HealthTrackGetAll-master</Crumb>
        <Grow />
        <IconCell $w={23} $justify="flex-start"><Chevron dir="down" size={5.5} sw={2} /></IconCell>
        <Refresh><RefreshIcon /></Refresh>
      </Box>
      <Box $w={186}>
        <IconCell $w={33} $justify="flex-end"><Magnifier /></IconCell>
        <SearchText>Pesquisar HealthTr...</SearchText>
      </Box>
    </AddressRow>
    <Body>
      <Places arrows selected="#cce8ff" />
      <Main>
        <Columns>
          <Column $w={340} $pl={21}><SortMark><Svg w={10} h={7}><path d="M.5 6L5 1.5L9.5 6" stroke="#777" /></Svg></SortMark>Nome</Column>
          <Column $w={180} $pl={7} $ls={0.35}>Data de modificação</Column>
          <Column $w={150} $pl={7}>Tipo</Column>
          <Column $w={40} $pl={7}>Tamanho</Column>
        </Columns>
        <Split>
          <FileList>
            {files.map(([name, kind, icon]) => (
              <FileRow key={name} $pl={5} $hot={name === "Starter"}>
                <FileIcon>{icon}</FileIcon>
                <Cell $w={299}>{name}</Cell>
                <Cell $dim $w={180}>28/09/2021 13:17</Cell>
                <Cell $dim $w={140}>{kind}</Cell>
              </FileRow>
            ))}
          </FileList>
        </Split>
        <HScroll $w={696}>
          <Arrow $w={21}><Chevron dir="left" size={4.5} c="#555" sw={2.2} /></Arrow>
          <HThumb $w={581} />
          <Grow />
          <Arrow $w={21}><Chevron size={4.5} c="#555" sw={2.2} /></Arrow>
        </HScroll>
      </Main>
    </Body>
    <Status $h={30}>
      <StatusCell $w={56}>6 itens</StatusCell>
      <ViewButton><DetailsIcon /></ViewButton>
      <ThumbView $mr={11}><PictureIcon /></ThumbView>
    </Status>
  </Window>
);

const sparks = [[70, 591, 6, 15], [147, 569, 6, 13], [225, 552, 4, 10], [227, 527, 3, 8], [301, 554, 5, 11], [330, 526, 4, 8], [357, 526, 8, 17], [310, 596, 8, 14]];
const motes = [[478, 526], [484, 548], [495, 557], [479, 563], [508, 568], [510, 559], [517, 568], [521, 592], [502, 577], [430, 528]];
const Background = () => (
  <Wallpaper width="1640" height="601">
    <defs>
      <radialGradient id="glow"><stop offset="0" stopColor="#0b5a14" /><stop offset="1" stopColor="#08350e" stopOpacity=".75" /></radialGradient>
      <linearGradient id="haze" x1="0" x2="1"><stop offset="0" stopColor="#041f0b" /><stop offset=".5" stopColor="#02160a" /><stop offset="1" stopColor="#020a05" /></linearGradient>
    </defs>
    <rect width="1640" height="601" fill="#020a05" />
    <path d="M56 522H400L380 601H30Q50 570 56 522Z" fill="url(#haze)" />
    <path d="M235 522H370L250 550Q238 550 232 522Z" fill="#06240c" />
    <path d="M235 601L245 582L392 556L385 601Z" fill="#0a3010" />
    <path d="M262 584L392 560M290 575L285 601" stroke="#041507" strokeWidth="1.5" fill="none" />
    <path d="M437 538Q470 530 478 570L456 562Q452 548 437 538Z" fill="#15420f" />
    <path d="M476 568Q530 560 545 601H490Z" fill="#08200f" />
    <path d="M470 578Q490 580 502 601H488Q484 588 470 578Z" fill="#10401c" />
    <path d="M512 522H560L545 590H525Z" fill="#0b2b16" />
    <path d="M592 522V601M607 522L614 601" stroke="#0f4a25" strokeWidth="2" />
    <path d="M605 522H633V601H612Z" fill="#0a2a15" />
    <ellipse cx="428" cy="575" rx="39" ry="42" fill="#000" />
    <path d="M370 601Q385 580 428 582T495 601Z" fill="#000" />
    <path d="M558 535L584 578" stroke="#1b6a3b" strokeDasharray="5 3" strokeWidth="1.5" />
    {sparks.map(([x, y, rx, ry]) => (
      <g key={`${x}-${y}`}>
        <ellipse cx={x} cy={y} rx={rx + 1} ry={ry} fill="url(#glow)" />
        <ellipse cx={x} cy={y} rx="2" ry="3.5" fill="#27c82c" />
      </g>
    ))}
    {motes.map(([x, y]) => <circle key={`${x}-${y}`} cx={x} cy={y} r="1.3" fill="#1ea83a" />)}
    <rect x="634" y="0" width="6" height="601" fill="#06180b" />
    <path d="M634 240L640 235V380L634 390ZM634 460H640V520H634Z" fill="#124d17" />
    <path d="M634 424L640 432V440L634 436Z" fill="#a9d520" />
    <rect width="640" height="7" fill="#020403" />
    <path d="M85 0H95V7H83ZM115 0H130L133 7H112Z" fill="#093a12" />
    <path d="M690 0H735L745 16H715ZM825 0H850L860 16H830ZM890 0H950L960 16H890Z" fill="#082016" />
    <path d="M700 0L718 16M800 4V16M846 0V12" stroke="#14452a" />
    <path d="M955 0H1072V16H955Z" fill="#0f382c" />
    <path d="M1015 0H1068L1066 16H1008Z" fill="#1b6152" />
    <path d="M1030 0H1052L1035 16H1018Z" fill="#2f9180" />
    <path d="M1072 0H1190V16H1072Z" fill="#010201" />
    <path d="M1190 0H1280V16H1190Z" fill="#06170f" />
    <path d="M1275 0H1365V16H1278Z" fill="#15444c" />
    <path d="M1330 0H1355L1345 16H1318Z" fill="#226f80" />
    <path d="M1365 0H1640V16H1365Z" fill="#030a08" />
    <rect x="1628" width="12" height="601" fill="#07120e" />
    <path d="M1628 215L1640 250V505L1628 500Z" fill="#18372d" />
    <path d="M1628 530H1640V601H1628Z" fill="#0b4347" />
    <path d="M634 586H1640V601H634Z" fill="#06190f" />
    <path d="M720 586H760L750 601H710ZM900 586H955V601H900ZM1170 586H1200V601H1165ZM1310 586H1340V601H1300Z" fill="#0d3a20" />
    <path d="M778 586L822 598L824 586" stroke="#1d8a24" strokeWidth="1.5" fill="#0c3f1d" />
    <path d="M876 586H880V592L884 597L877 594Z" fill="#b5dc28" />
    <path d="M1216 586H1275L1265 601H1230ZM830 586L850 601H820Z" fill="#010302" />
    <path d="M1430 586H1600L1560 601H1450Z" fill="#0c2f26" />
    <path d="M1540 601L1600 586H1640V601Z" fill="#157a73" />
    <rect y="0" width="5" height="601" fill="#020202" />
    <rect y="22" width="5" height="60" fill="#ea4335" />
    <path d="M0 40L4 50L0 62" stroke="#fff" strokeWidth="3" fill="none" />
    <rect y="149" width="5" height="52" fill="#e3e6e6" />
    <rect y="270" width="5" height="56" fill="#4a86ea" />
    <rect y="291" width="4" height="16" fill="#e9effb" />
    <path d="M3.5 94V100M3.5 218V224M3.5 341V347" stroke="#ccc" />
  </Wallpaper>
);

export default function App() {
  return (
    <Desktop>
      <Global />
      <Background />
      <Frame />
      <DownloadsWindow />
      <ProjectWindow />
      <Pointer $x={197} $y={307} $w={111} $h={90} $pad={11} $shape="0 23px, 54.5px 23px, 54.5px 0, 111px 45px, 55px 90px, 55px 68px, 0 68px">(1)</Pointer>
      <Pointer $x={852} $y={370} $w={95} $h={76} $pad={8} $shape="0 19px, 47px 19px, 47px 0, 95px 38px, 47px 76px, 47px 57px, 0 57px">(2)</Pointer>
    </Desktop>
  );
}
